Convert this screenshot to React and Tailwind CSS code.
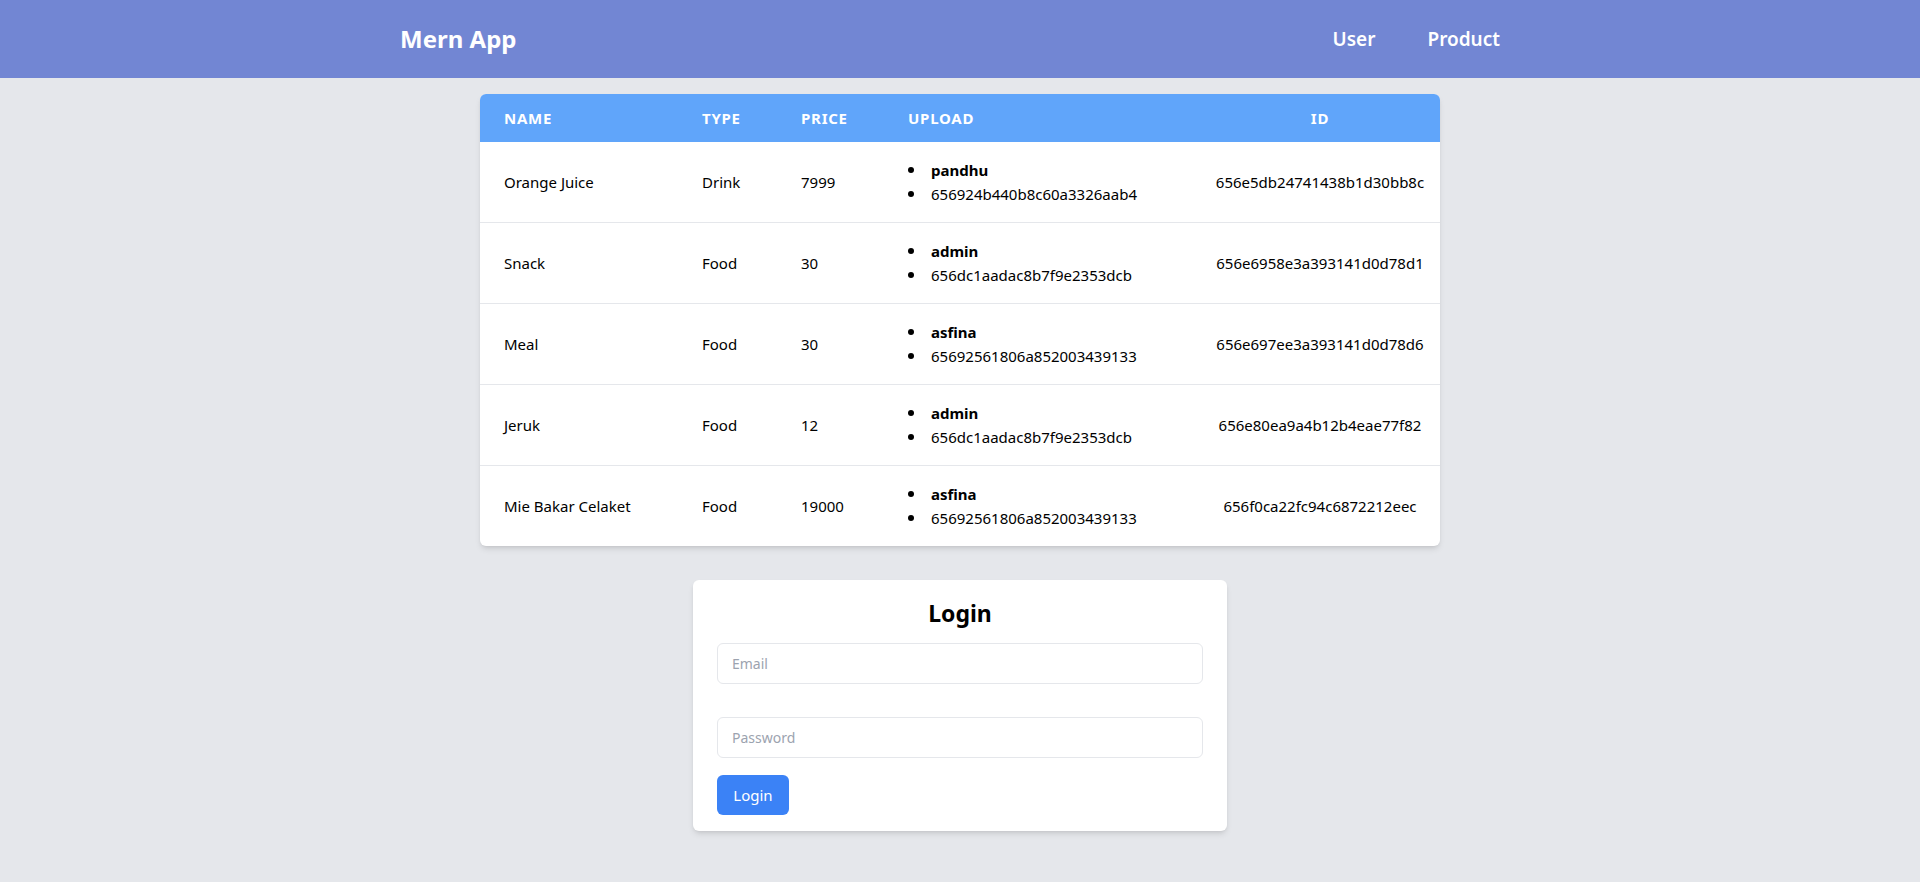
import React from "react";

const rows = [
  { name: "Orange Juice", type: "Drink", price: "7999", user: "pandhu", uid: "656924b440b8c60a3326aab4", id: "656e5db24741438b1d30bb8c" },
  { name: "Snack", type: "Food", price: "30", user: "admin", uid: "656dc1aadac8b7f9e2353dcb", id: "656e6958e3a393141d0d78d1" },
  { name: "Meal", type: "Food", price: "30", user: "asfina", uid: "65692561806a852003439133", id: "656e697ee3a393141d0d78d6" },
  { name: "Jeruk", type: "Food", price: "12", user: "admin", uid: "656dc1aadac8b7f9e2353dcb", id: "656e80ea9a4b12b4eae77f82" },
  { name: "Mie Bakar Celaket", type: "Food", price: "19000", user: "asfina", uid: "65692561806a852003439133", id: "656f0ca22fc94c6872212eec" },
];

export default function App() {
  return (
    <div className="min-h-[882px] bg-[#e5e7eb] font-['Noto_Sans',sans-serif] text-black">
      <nav className="h-[78px] bg-[#7286d3]">
        <div className="mx-auto flex h-full max-w-7xl items-center justify-between px-20">
          <span className="text-[24px] font-bold text-white">Mern App</span>
          <div className="flex gap-3">
            <a className="px-5 text-[19px] font-semibold text-white">User</a>
            <a className="px-5 text-[19px] font-semibold text-white">Product</a>
          </div>
        </div>
      </nav>

      <div className="mx-auto mt-4 w-1/2 overflow-hidden rounded-md bg-white shadow-md">
        <table className="w-full table-fixed border-collapse">
          <colgroup>
            <col className="w-[198px]" />
            <col className="w-[99px]" />
            <col className="w-[107px]" />
            <col className="w-[316px]" />
            <col className="w-[240px]" />
          </colgroup>
          <thead>
            <tr className="h-[48px] bg-[#60a5fa] text-left text-[15px] font-bold uppercase tracking-wider text-white">
              <th className="px-6">Name</th>
              <th className="px-6">Type</th>
              <th className="px-6">Price</th>
              <th className="px-6">Upload</th>
              <th className="px-2 text-center">ID</th>
            </tr>
          </thead>
          <tbody className="text-[15px] leading-6">
            {rows.map((r, i) => (
              <tr key={i} className={i < rows.length - 1 ? "border-b border-[#e5e7eb]" : ""}>
                <td className="px-6 py-4">{r.name}</td>
                <td className="px-6 py-4">{r.type}</td>
                <td className="px-6 py-4">{r.price}</td>
                <td className="px-6 py-4">
                  <ul>
                    <li className="flex items-center font-bold">
                      <span className="mr-[17px] h-[6px] w-[6px] shrink-0 rounded-full bg-black" />
                      {r.user}
                    </li>
                    <li className="flex items-center">
                      <span className="mr-[17px] h-[6px] w-[6px] shrink-0 rounded-full bg-black" />
                      {r.uid}
                    </li>
                  </ul>
                </td>
                <td className="px-2 py-4 text-center">{r.id}</td>
              </tr>
            ))}
          </tbody>
        </table>
      </div>

      <div className="mx-auto mt-[34px] w-[534px] rounded-md bg-white px-6 pb-4 pt-[17px] shadow-md">
        <h2 className="text-center text-[23px] font-bold leading-8">Login</h2>
        <input
          placeholder="Email"
          className="mt-[14px] block h-[41px] w-full rounded-md border border-[#e5e7eb] px-3.5 text-[14px] outline-none placeholder:text-[#9ca3af]"
        />
        <input
          placeholder="Password"
          type="password"
          className="mt-[33px] block h-[41px] w-full rounded-md border border-[#e5e7eb] px-3.5 text-[14px] outline-none placeholder:text-[#9ca3af]"
        />
        <button className="mt-[17px] block h-[40px] w-[72px] rounded-md bg-[#3b82f6] text-[15px] text-white">Login</button>
      </div>
    </div>
  );
}
